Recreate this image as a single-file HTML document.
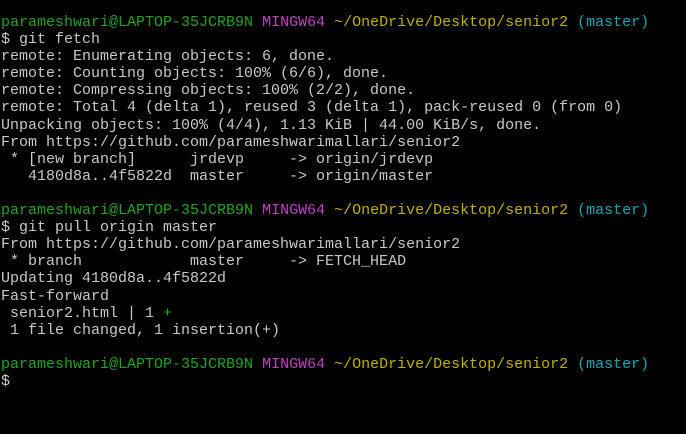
<!DOCTYPE html>
<html><head><meta charset="utf-8"><style>
html,body{margin:0;padding:0;background:#000;width:686px;height:434px;overflow:hidden}
pre{margin:0;position:absolute;left:1px;top:14px;font-family:"Liberation Mono",monospace;font-size:15px;line-height:17.1px;color:#c8c8c8;white-space:pre}
.g{color:#1ea51e}.m{color:#c040c0}.y{color:#c0b000}.c{color:#10a8b8}
</style></head><body>
<pre><span class="g">parameshwari@LAPTOP-35JCRB9N</span> <span class="m">MINGW64</span> <span class="y">~/OneDrive/Desktop/senior2</span> <span class="c">(master)</span>
$ git fetch
remote: Enumerating objects: 6, done.
remote: Counting objects: 100% (6/6), done.
remote: Compressing objects: 100% (2/2), done.
remote: Total 4 (delta 1), reused 3 (delta 1), pack-reused 0 (from 0)
Unpacking objects: 100% (4/4), 1.13 KiB | 44.00 KiB/s, done.
From https://github.com/parameshwarimallari/senior2
 * [new branch]      jrdevp     -&gt; origin/jrdevp
   4180d8a..4f5822d  master     -&gt; origin/master

<span class="g">parameshwari@LAPTOP-35JCRB9N</span> <span class="m">MINGW64</span> <span class="y">~/OneDrive/Desktop/senior2</span> <span class="c">(master)</span>
$ git pull origin master
From https://github.com/parameshwarimallari/senior2
 * branch            master     -&gt; FETCH_HEAD
Updating 4180d8a..4f5822d
Fast-forward
 senior2.html | 1 <span class="g">+</span>
 1 file changed, 1 insertion(+)

<span class="g">parameshwari@LAPTOP-35JCRB9N</span> <span class="m">MINGW64</span> <span class="y">~/OneDrive/Desktop/senior2</span> <span class="c">(master)</span>
$</pre>
</body></html>
